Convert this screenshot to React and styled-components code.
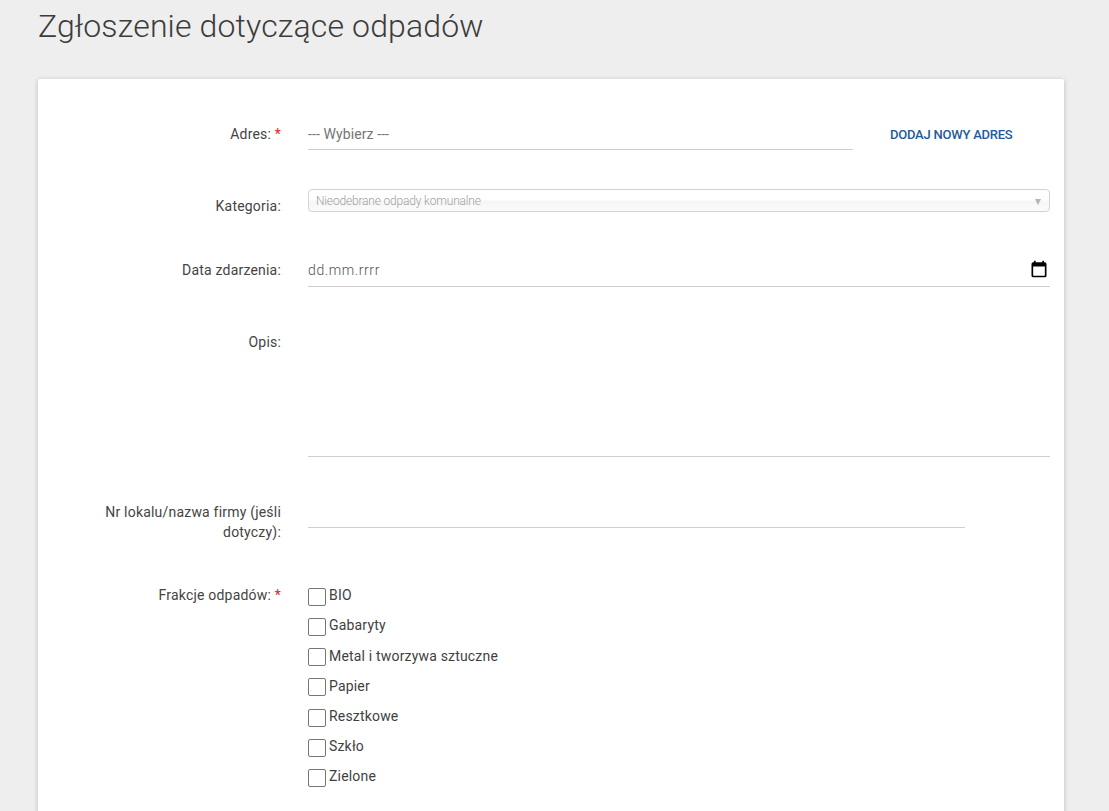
import React from "react";
import styled, { createGlobalStyle } from "styled-components";

const Global = createGlobalStyle`
  html, body { margin: 0; padding: 0; background: #eeeeee; overflow: hidden; }
  body { font-family: Roboto, "Liberation Sans", sans-serif; color: #3a3a3a; }
  * { box-sizing: border-box; }
`;

const Page = styled.div`
  height: 811px;
  padding: 0 45px 0 38px;
  overflow: hidden;
`;

const Title = styled.h1`
  margin: 0;
  padding-top: 7px;
  height: 79px;
  font-size: 32px;
  line-height: 38px;
  font-weight: 300;
  letter-spacing: 0.14px;
  color: #3c3c3c;
`;

const Card = styled.form`
  background: #fff;
  border-radius: 2px;
  box-shadow: 0 1px 5px rgba(0, 0, 0, 0.22);
  padding: 40px 14px 40px 0;
  min-height: 800px;
`;

const Row = styled.div`
  display: flex;
  align-items: flex-start;
  margin-top: ${(p) => p.$top || 0}px;
`;

const Label = styled.label`
  flex: 0 0 243px;
  padding-left: 50px;
  padding-top: ${(p) => p.$top || 0}px;
  text-align: right;
  font-size: 14px;
  line-height: 20px;
  letter-spacing: 0.2px;
  color: #444;
`;

const Star = styled.span`
  color: #e0202c;
`;

const Field = styled.div`
  flex: 1;
  min-width: 0;
  margin-left: 27px;
  display: flex;
  align-items: flex-start;
`;

const Underlined = styled.div`
  display: flex;
  align-items: center;
  justify-content: space-between;
  width: ${(p) => (p.$width ? `${p.$width}px` : "100%")};
  height: ${(p) => p.$height || 31}px;
  border-bottom: 1px solid #cfcfcf;
  font-size: 14px;
  letter-spacing: 0.1px;
  color: #757575;
`;

const AddLink = styled.a`
  margin-left: 37px;
  height: 31px;
  font-size: 13px;
  line-height: 31px;
  font-weight: 500;
  letter-spacing: -0.23px;
  color: #1f5a9a;
  white-space: nowrap;
`;

const Select = styled.div`
  width: 100%;
  height: 23px;
  padding: 0 8px 0 7px;
  display: flex;
  align-items: center;
  justify-content: space-between;
  border: 1px solid #d3d3d3;
  border-radius: 4px;
  background: linear-gradient(#ffffff 0%, #ffffff 45%, #f6f6f6 55%, #fbfbfb 100%);
  font-size: 12px;
  font-weight: 300;
  letter-spacing: -0.18px;
  color: #a0a0a0;
`;

const Caret = styled.span`
  width: 0;
  height: 0;
  margin-top: 2px;
  border-left: 3px solid transparent;
  border-right: 3px solid transparent;
  border-top: 6px solid #b5b5b5;
`;

const DateText = styled.span`
  margin-top: -2px;
  letter-spacing: 0.6px;
  font-weight: 300;
  color: #555;
`;

const CalendarIcon = styled.svg`
  display: block;
  width: 20px;
  height: 20px;
  margin: -3px 1px 0 0;
`;

const Options = styled.div`
  display: flex;
  flex-direction: column;
  padding-top: 3px;
`;

const Option = styled.label`
  display: flex;
  align-items: flex-start;
  height: 30.17px;
  font-size: 14px;
  line-height: 14px;
  letter-spacing: 0.18px;
  color: #3f3f3f;
`;

const OptionText = styled.span`
  margin-top: 0.2px;
`;

const Box = styled.input.attrs({ type: "checkbox" })`
  appearance: none;
  flex: none;
  width: 18px;
  height: 18px;
  margin: 0 3px 0 0;
  background: #fff;
  border: 1px solid #767676;
  border-radius: 2px;
`;

const fractions = ["BIO", "Gabaryty", "Metal i tworzywa sztuczne", "Papier", "Resztkowe", "Szkło", "Zielone"];

export default function App() {
  return (
    <Page>
      <Global />
      <Title>Zgłoszenie dotyczące odpadów</Title>
      <Card>
        <Row>
          <Label $top={5}>Adres: <Star>*</Star></Label>
          <Field>
            <Underlined $width={545}>--- Wybierz ---</Underlined>
            <AddLink>DODAJ NOWY ADRES</AddLink>
          </Field>
        </Row>
        <Row $top={39}>
          <Label $top={7}>Kategoria:</Label>
          <Field>
            <Select>
              Nieodebrane odpady komunalne
              <Caret />
            </Select>
          </Field>
        </Row>
        <Row $top={39}>
          <Label $top={5}>Data zdarzenia:</Label>
          <Field>
            <Underlined $height={32}>
              <DateText>dd.mm.rrrr</DateText>
              <CalendarIcon viewBox="0 0 24 24" fill="#000">
                <path d="M19 4h-1V2h-2v2H8V2H6v2H5a2 2 0 0 0-2 2v14a2 2 0 0 0 2 2h14a2 2 0 0 0 2-2V6a2 2 0 0 0-2-2zm0 16H5V9h14v11z" />
              </CalendarIcon>
            </Underlined>
          </Field>
        </Row>
        <Row $top={40}>
          <Label $top={5}>Opis:</Label>
          <Field>
            <Underlined $height={130} />
          </Field>
        </Row>
        <Row $top={40}>
          <Label $top={5}>Nr lokalu/nazwa firmy (jeśli dotyczy):</Label>
          <Field>
            <Underlined $width={657} />
          </Field>
        </Row>
        <Row $top={43}>
          <Label>Frakcje odpadów: <Star>*</Star></Label>
          <Field>
            <Options>
              {fractions.map((f) => (
                <Option key={f}>
                  <Box />
                  <OptionText>{f}</OptionText>
                </Option>
              ))}
            </Options>
          </Field>
        </Row>
      </Card>
    </Page>
  );
}
